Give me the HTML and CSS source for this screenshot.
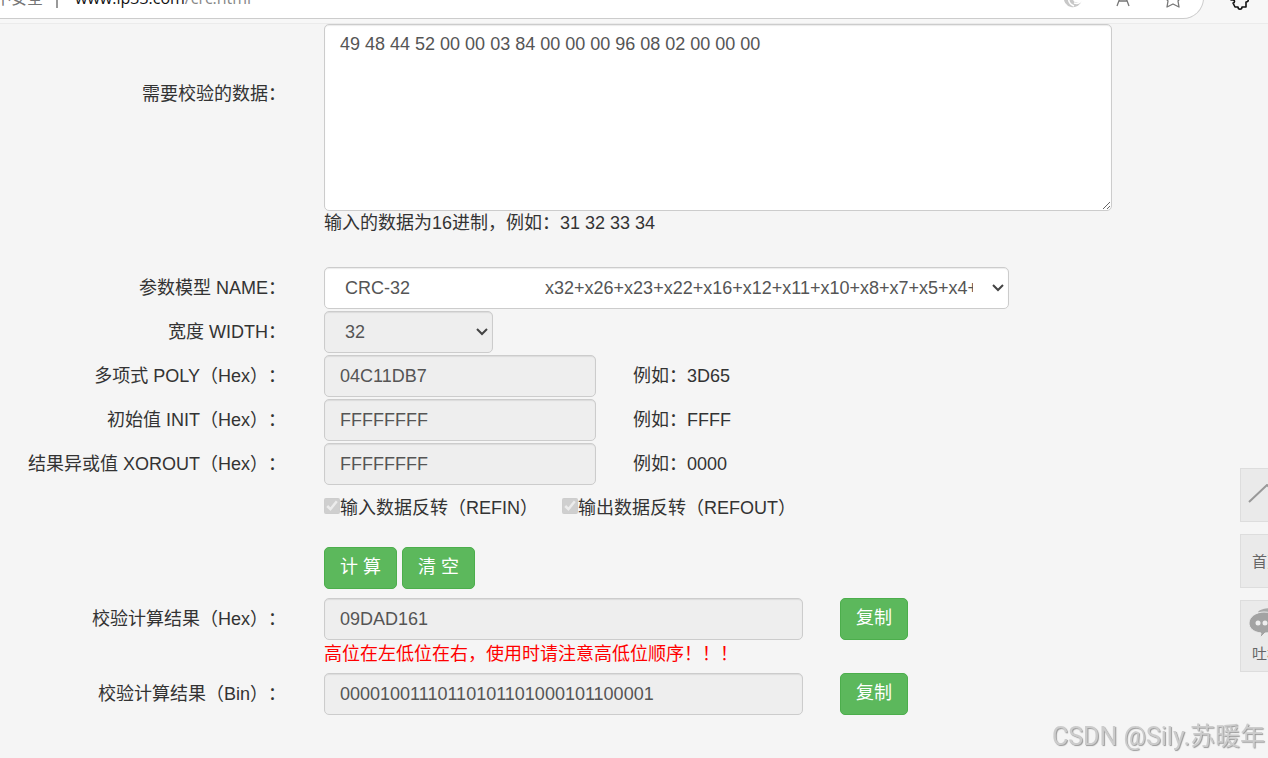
FILE: index.html
```html
<!DOCTYPE html>
<html lang="zh-CN">
<head>
    <meta charset="UTF-8">
    <meta name="viewport" content="width=device-width, initial-scale=1.0">
    <title>CRC校验</title>
    <link rel="stylesheet" href="styles.css">
</head>
<body>
    <div class="toolbar">
        <div class="address">
            <span class="safe">不安全</span>
            <span class="line"></span>
            <span class="url">www.ip33.com<span class="path">/crc.html</span></span>
            <div class="tools">
                <svg width="20" height="20" viewBox="0 0 20 20"><path d="M1 8a9 9 0 0 0 18 4c-3 4-9 3-9-1 0-3 4-5 9-3V0H1z" fill="#c8c8c8"/><path d="M6 8c-1 4 0 8 5 10M10 11c0-3 4-5 9-4M11 15c3 1 6 0 8-3" fill="none" stroke="#fff" stroke-width="1.5"/></svg>
                <svg width="20" height="20" viewBox="0 0 20 20"><path d="M4 18L10 2l6 16M6 13h8" fill="none" stroke="#777" stroke-width="1.3"/></svg>
                <svg width="20" height="20" viewBox="0 0 20 20"><path d="M10 1l3 6 6 1-4 5 1 6-6-3-6 3 1-6-4-5 6-1z" fill="none" stroke="#777" stroke-width="1.3" stroke-linejoin="round"/></svg>
            </div>
        </div>
        <svg class="ext" width="22" height="22" viewBox="0 0 22 22"><path d="M3 3v8h2c2 0 2 3 0 3l2 4h3c0 3 4 3 4 0h4v-5c3 0 3-4 0-4V3z" fill="none" stroke="#111" stroke-width="1.6" stroke-linejoin="round"/></svg>
    </div>
    <form class="crc-form" onsubmit="return false">
        <div class="row row-data">
            <label for="data">需要校验的数据：</label>
            <div>
                <textarea id="data" class="control">49 48 44 52 00 00 03 84 00 00 00 96 08 02 00 00 00</textarea>
                <p class="help">输入的数据为16进制，例如：31 32 33 34</p>
            </div>
        </div>
        <div class="row">
            <label for="model">参数模型 NAME：</label>
            <div>
                <select id="model" class="control model">
                    <option>CRC-32&nbsp;&nbsp;&nbsp;&nbsp;&nbsp;&nbsp;&nbsp;&nbsp;&nbsp;&nbsp;&nbsp;&nbsp;&nbsp;&nbsp;&nbsp;&nbsp;&nbsp;&nbsp;&nbsp;&nbsp;&nbsp;&nbsp;&nbsp;&nbsp;&nbsp;&nbsp;&nbsp;x32+x26+x23+x22+x16+x12+x11+x10+x8+x7+x5+x4+x2+x+1</option>
                </select>
            </div>
        </div>
        <div class="row">
            <label for="width">宽度 WIDTH：</label>
            <div>
                <select id="width" class="control width" disabled>
                    <option>32</option>
                </select>
            </div>
        </div>
        <div class="row">
            <label for="poly">多项式 POLY（Hex）：</label>
            <div class="fields">
                <input type="text" id="poly" class="control param" value="04C11DB7" readonly>
                <span>例如：3D65</span>
            </div>
        </div>
        <div class="row">
            <label for="init">初始值 INIT（Hex）：</label>
            <div class="fields">
                <input type="text" id="init" class="control param" value="FFFFFFFF" readonly>
                <span>例如：FFFF</span>
            </div>
        </div>
        <div class="row">
            <label for="xorout">结果异或值 XOROUT（Hex）：</label>
            <div class="fields">
                <input type="text" id="xorout" class="control param" value="FFFFFFFF" readonly>
                <span>例如：0000</span>
            </div>
        </div>
        <div class="row">
            <div class="checks">
                <label class="check"><input type="checkbox" checked disabled>输入数据反转（REFIN）</label>
                <label class="check"><input type="checkbox" checked disabled>输出数据反转（REFOUT）</label>
            </div>
        </div>
        <div class="row row-buttons">
            <div class="buttons">
                <button type="button" class="btn">计 算</button>
                <button type="button" class="btn">清 空</button>
            </div>
        </div>
        <div class="row">
            <label for="hex">校验计算结果（Hex）：</label>
            <div class="fields">
                <input type="text" id="hex" class="control result" value="09DAD161" readonly>
                <button type="button" class="btn">复制</button>
            </div>
        </div>
        <div class="row">
            <p class="help warn">高位在左低位在右，使用时请注意高低位顺序！！！</p>
        </div>
        <div class="row">
            <label for="bin">校验计算结果（Bin）：</label>
            <div class="fields">
                <input type="text" id="bin" class="control result" value="00001001110110101101000101100001" readonly>
                <button type="button" class="btn">复制</button>
            </div>
        </div>
    </form>
    <div class="side">
        <a href="#" class="side-item" aria-label="返回顶部">
            <svg width="38" height="22" viewBox="0 0 38 22"><path d="M1 18L19 1l18 17" fill="none" stroke="#999" stroke-width="2"/></svg>
        </a>
        <a href="#" class="side-item">首页</a>
        <a href="#" class="side-item side-talk">
            <svg width="38" height="32" viewBox="0 0 38 32"><path d="M10 5C15-1 36 0 37 10c0 5-3 7-4 8l1 5-6-3z" fill="#aaa"/><path d="M16 5c9 0 16 5 16 11S25 26 17 26l-5 5 1-5C5 25 1 21 1 16 1 10 8 5 16 5z" fill="#a3a3a3" stroke="#eaeaea"/><circle cx="10" cy="16" r="2.5" fill="#eee"/><circle cx="17" cy="16" r="2.5" fill="#eee"/><circle cx="24" cy="16" r="2.5" fill="#eee"/></svg>
            吐槽
        </a>
    </div>
    <div class="watermark">CSDN @Sily.苏暖年</div>
</body>
</html>
```
FILE: styles.css
```css
* {
    box-sizing: border-box;
}
body {
    margin: 0;
    overflow: hidden;
    background-color: #f5f5f5;
    color: #333;
    font-family: "Liberation Sans", "Noto Sans CJK SC", sans-serif;
    font-size: 18px;
    line-height: 25px;
    text-spacing-trim: space-all;
}
p {
    margin: 0;
}
.toolbar {
    display: flex;
    align-items: flex-end;
    gap: 24px;
    height: 24px;
    padding: 0 18px 4px 0;
    overflow: hidden;
    background-color: #f7f7f7;
    border-bottom: 1px solid #ebebeb;
}
.address {
    display: flex;
    flex: 1;
    align-items: center;
    height: 42px;
    background-color: white;
    border: 1px solid #ccc;
    border-left: none;
    border-radius: 0 21px 21px 0;
    font-family: "Open Sans", "Noto Sans CJK SC", sans-serif;
    font-size: 16px;
}
.safe {
    margin-left: -5px;
    color: #767676;
}
.line {
    width: 2px;
    height: 20px;
    margin: 0 17px 0 13px;
    background-color: #999;
}
.url {
    color: #111;
}
.path {
    color: #888;
}
.tools {
    display: flex;
    gap: 30px;
    margin-left: auto;
    padding-right: 20px;
}
.ext {
    flex-shrink: 0;
    margin-bottom: 8px;
}
.row {
    display: grid;
    grid-template-columns: 286px 1fr;
    column-gap: 38px;
    align-items: center;
    margin-bottom: 2px;
}
.row > label {
    text-align: right;
}
.row > :only-child {
    grid-column: 2;
}
.row-data {
    align-items: start;
    margin-bottom: 31px;
}
.row-data > label {
    padding-top: 58px;
}
.control {
    display: block;
    height: 42px;
    margin: 0;
    padding: 7px 15px;
    background-color: white;
    border: 1px solid #ccc;
    border-radius: 5px;
    box-shadow: inset 0 1px 1px rgba(0, 0, 0, 0.08);
    color: #555;
    font: inherit;
}
.control:disabled,
.control:read-only:not(select) {
    background-color: #eee;
    opacity: 1;
}
textarea.control {
    width: 788px;
    max-width: 100%;
    height: 187px;
}
select.control {
    padding: 7px 35px 7px 20px;
    appearance: none;
    background-image: url("data:image/svg+xml,%3Csvg xmlns='http://www.w3.org/2000/svg' width='12' height='8' viewBox='0 0 12 8'%3E%3Cpath d='M1 1l5 5 5-5' fill='none' stroke='%23444' stroke-width='2'/%3E%3C/svg%3E");
    background-position: right 4px center;
    background-repeat: no-repeat;
}
.model {
    width: 685px;
}
.width {
    width: 169px;
}
.param {
    width: 272px;
}
.result {
    width: 479px;
}
.fields {
    display: flex;
    align-items: center;
    gap: 37px;
}
.checks {
    display: flex;
    height: 42px;
}
.check {
    display: flex;
    align-items: center;
    width: 238px;
    white-space: nowrap;
}
.check input {
    width: 16px;
    height: 16px;
    margin: 0 0 4px;
}
.row-buttons {
    margin: 18px 0 9px;
}
.buttons {
    display: flex;
    gap: 5px;
}
.btn {
    height: 42px;
    padding: 0 15px 2px;
    background-color: #5cb85c;
    border: 1px solid #4cae4c;
    border-radius: 5px;
    color: white;
    font: inherit;
    cursor: pointer;
}
.warn {
    margin-bottom: 4px;
    color: red;
}
.side {
    position: fixed;
    right: -26px;
    bottom: 86px;
    display: flex;
    flex-direction: column;
    gap: 12px;
}
.side-item {
    display: flex;
    flex-direction: column;
    align-items: center;
    justify-content: center;
    width: 54px;
    height: 54px;
    background-color: #eaeaea;
    border: 1px solid #ddd;
    color: #666;
    font-size: 15px;
    text-decoration: none;
}
.side-talk {
    height: 72px;
    padding-top: 4px;
    line-height: 30px;
}
.watermark {
    position: fixed;
    right: 3px;
    bottom: 5px;
    color: #ccc;
    font-family: Roboto, "Noto Sans CJK SC", sans-serif;
    font-size: 25px;
    line-height: 32px;
    text-shadow: 1px 1px 1px #999;
}
```
